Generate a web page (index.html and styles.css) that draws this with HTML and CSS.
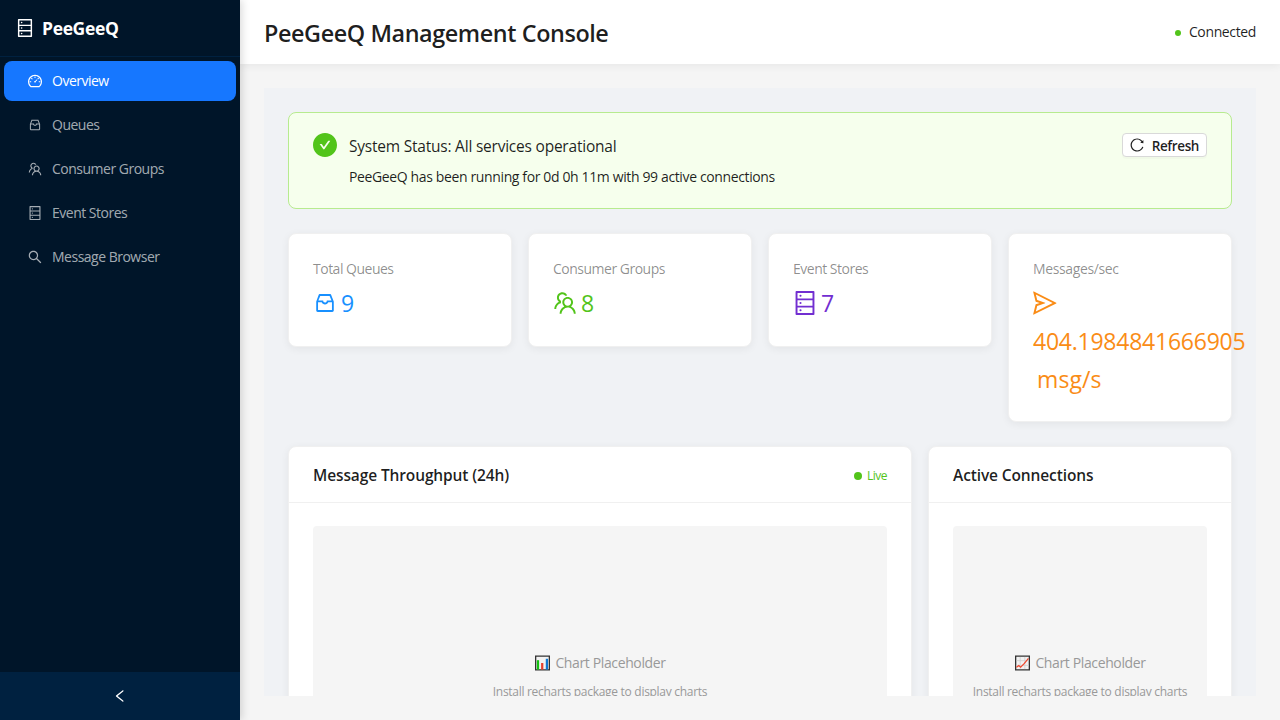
FILE: index.html
```html
<!DOCTYPE html>
<html lang="en">
<head>
<meta charset="utf-8">
<title>PeeGeeQ Management Console</title>
<link rel="stylesheet" href="styles.css">
</head>
<body>
<svg class="sprite" aria-hidden="true">
  <symbol id="database" viewBox="64 64 896 896"><path d="M832 64H192c-17.7 0-32 14.3-32 32v832c0 17.7 14.3 32 32 32h640c17.7 0 32-14.3 32-32V96c0-17.7-14.3-32-32-32zm-600 72h560v208H232V136zm560 480H232V408h560v208zm0 272H232V680h560v208zM304 240a40 40 0 1080 0 40 40 0 10-80 0zm0 272a40 40 0 1080 0 40 40 0 10-80 0zm0 272a40 40 0 1080 0 40 40 0 10-80 0z"/></symbol>
  <symbol id="dashboard" viewBox="64 64 896 896"><path d="M924.8 385.6a446.7 446.7 0 00-96-142.4 446.7 446.7 0 00-142.4-96C631.1 123.8 572.5 112 512 112s-119.1 11.8-174.4 35.2a446.7 446.7 0 00-142.4 96 446.7 446.7 0 00-96 142.4C75.8 440.9 64 499.5 64 560c0 132.7 58.3 257.7 159.9 343.1l1.7 1.4c5.8 4.8 13.1 7.5 20.6 7.5h531.7c7.5 0 14.8-2.7 20.6-7.5l1.7-1.4C901.7 817.7 960 692.7 960 560c0-60.5-11.9-119.1-35.2-174.4zM761.4 836H262.6A371.12 371.12 0 01140 560c0-99.4 38.7-192.8 109-263 70.3-70.3 163.7-109 263-109 99.4 0 192.8 38.7 263 109 70.3 70.3 109 163.7 109 263 0 105.6-44.5 205.5-122.6 276zM623.5 421.5a8.03 8.03 0 00-11.3 0L527.7 506c-18.7-5-39.4-.2-54.1 14.5a55.95 55.95 0 000 79.2 55.95 55.95 0 0079.2 0 55.87 55.87 0 0014.5-54.1l84.5-84.5c3.1-3.1 3.1-8.2 0-11.3l-28.3-28.3zM490 320h44c4.4 0 8-3.6 8-8v-80c0-4.4-3.6-8-8-8h-44c-4.4 0-8 3.6-8 8v80c0 4.4 3.6 8 8 8zm260 218v44c0 4.4 3.6 8 8 8h80c4.4 0 8-3.6 8-8v-44c0-4.4-3.6-8-8-8h-80c-4.4 0-8 3.6-8 8zm12.7-197.2l-31.1-31.1a8.03 8.03 0 00-11.3 0l-56.6 56.6a8.03 8.03 0 000 11.3l31.1 31.1c3.1 3.1 8.2 3.1 11.3 0l56.6-56.6c3.1-3.1 3.1-8.2 0-11.3zm-458.6-31.1a8.03 8.03 0 00-11.3 0l-31.1 31.1a8.03 8.03 0 000 11.3l56.6 56.6c3.1 3.1 8.2 3.1 11.3 0l31.1-31.1c3.1-3.1 3.1-8.2 0-11.3l-56.6-56.6zM262 530h-80c-4.4 0-8 3.6-8 8v44c0 4.4 3.6 8 8 8h80c4.4 0 8-3.6 8-8v-44c0-4.4-3.6-8-8-8z"/></symbol>
  <symbol id="inbox" viewBox="0 0 1024 1024"><path d="M885.2 446.3l-.2-.8-112.2-285.1c-5-16.1-19.9-27.2-36.8-27.2H281.2c-17 0-32.1 11.3-36.9 27.6L139.4 443l-.3.7-.2.8c-1.3 4.9-1.7 9.9-1 14.8-.1 1.6-.2 3.2-.2 4.8V830a60.9 60.9 0 0060.8 60.8h627.2c33.5 0 60.8-27.3 60.9-60.8V464.1c0-1.3 0-2.6-.1-3.7.4-4.9 0-9.6-1.3-14.1zm-295.8-43l-.3 15.7c-.8 44.9-31.8 75.1-77.1 75.1-22.1 0-41.1-7.1-54.8-20.6S436 441.2 435.6 419l-.3-15.7H229.5L309 210h399.2l81.7 193.3H589.4zm-375 76.8h157.3c24.3 57.1 76 90.8 140.4 90.8 33.7 0 65-9.4 90.3-27.2 22.2-15.6 39.5-37.4 50.7-63.6h156.5V814H214.4V480.1z"/></symbol>
  <symbol id="team" viewBox="64 64 896 896"><path d="M824.2 699.9a301.55 301.55 0 00-86.4-60.4C783.1 602.8 812 546.8 812 484c0-110.8-92.4-201.7-203.2-200-109.1 1.7-197 90.6-197 200 0 62.8 29 118.8 74.2 155.5a300.95 300.95 0 00-86.4 60.4C345 754.6 314 826.8 312 903.8a8 8 0 008 8.2h56c4.3 0 7.9-3.4 8-7.7 1.9-58 25.4-112.3 66.7-153.5A226.62 226.62 0 01612 684c60.9 0 118.2 23.7 161.3 66.8C814.6 792 838 846.3 840 904.3c.1 4.3 3.7 7.7 8 7.7h56a8 8 0 008-8.2c-2-77-33-149.2-87.8-203.9zM612 612c-34.2 0-66.4-13.3-90.5-37.5a126.86 126.86 0 01-37.5-91.8c.3-32.8 13.4-64.5 36.3-88 24-24.6 56.1-38.3 90.4-38.7 33.9-.3 66.8 12.9 91 36.6 24.8 24.3 38.4 56.8 38.4 91.4 0 34.2-13.3 66.3-37.5 90.5A127.3 127.3 0 01612 612zM361.5 510.4c-.9-8.7-1.4-17.5-1.4-26.4 0-15.9 1.5-31.4 4.3-46.5.7-3.6-1.2-7.3-4.5-8.8-13.6-6.1-26.1-14.5-36.9-25.1a127.54 127.54 0 01-38.7-95.4c.9-32.1 13.8-62.6 36.3-85.6 24.7-25.3 57.9-39.1 93.2-38.7 31.9.3 62.7 12.6 86 34.4 7.9 7.4 14.7 15.6 20.4 24.4 2 3.1 5.9 4.4 9.3 3.2 17.6-6.1 36.2-10.4 55.3-12.4 5.6-.6 8.8-6.6 6.3-11.6-32.5-64.3-98.9-108.7-175.7-109.9-110.9-1.7-203.3 89.2-203.3 199.9 0 62.8 28.9 118.8 74.2 155.5-31.8 14.7-61.1 35-86.5 60.4-54.8 54.7-85.8 126.9-87.8 204a8 8 0 008 8.2h56.1c4.3 0 7.9-3.4 8-7.7 1.9-58 25.4-112.3 66.7-153.5 29.4-29.4 65.4-49.8 104.7-59.7 3.9-1 6.5-4.7 6-8.7z"/></symbol>
  <symbol id="search" viewBox="64 64 896 896"><path d="M909.6 854.5L649.9 594.8C690.2 542.7 712 479 712 412c0-80.2-31.3-155.4-87.9-212.1-56.6-56.7-132-87.9-212.1-87.9s-155.5 31.3-212.1 87.9C143.2 256.5 112 331.8 112 412c0 80.1 31.3 155.5 87.9 212.1C256.5 680.8 331.8 712 412 712c67 0 130.6-21.8 182.7-62l259.7 259.6a8.2 8.2 0 0011.6 0l43.6-43.5a8.2 8.2 0 000-11.6zM570.4 570.4C528 612.7 471.8 636 412 636s-116-23.3-158.4-65.6C211.3 528 188 471.8 188 412s23.3-116.1 65.6-158.4C296 211.3 352.2 188 412 188s116.1 23.2 158.4 65.6S636 352.2 636 412s-23.3 116.1-65.6 158.4z"/></symbol>
  <symbol id="reload" viewBox="64 64 896 896"><path d="M909.1 209.3l-56.4 44.1C775.8 155.1 656.2 92 521.9 92 290 92 102.3 279.5 102 511.5 101.7 743.7 289.8 932 521.9 932c181.3 0 335.8-115 394.6-276.1 1.5-4.2-.7-8.9-4.9-10.3l-56.7-19.5a8 8 0 00-10.1 4.8c-1.8 5-3.8 10-5.9 14.9-17.3 41-42.1 77.8-73.7 109.4A344.77 344.77 0 01655.9 829c-42.3 17.9-87.4 27-133.8 27-46.5 0-91.5-9.1-133.8-27A341.5 341.5 0 01279 755.2a342.16 342.16 0 01-73.7-109.4c-17.9-42.4-27-87.4-27-133.9s9.1-91.5 27-133.9c17.3-41 42.1-77.8 73.7-109.4 31.6-31.6 68.4-56.4 109.3-73.8 42.3-17.9 87.4-27 133.8-27 46.5 0 91.5 9.1 133.8 27a341.5 341.5 0 01109.3 73.8c9.9 9.9 19.2 20.4 27.8 31.4l-60.2 47a8 8 0 003 14.1l175.6 43c5 1.2 9.9-2.6 9.9-7.7l.8-180.9c-.1-6.6-7.8-10.3-13-6.2z"/></symbol>
  <symbol id="send" viewBox="64 64 896 896"><path d="M931.4 498.9L94.9 79.5c-3.4-1.7-7.3-2.1-11-1.2a15.99 15.99 0 00-11.7 19.3l86.2 352.2c1.3 5.3 5.2 9.6 10.4 11.3l147.7 50.7-147.6 50.7c-5.2 1.8-9.1 6-10.3 11.3L72.2 926.5c-.9 3.7-.5 7.6 1.2 10.9 3.9 7.9 13.5 11.1 21.5 7.2l836.5-417c3.1-1.5 5.6-4.1 7.2-7.1 3.9-8 .7-17.6-7.2-21.6zM170.8 826.3l50.3-205.6 295.2-101.3c2.3-.8 4.2-2.6 5-5 1.4-4.2-.8-8.7-5-10.2L221.1 403 171 198.2l628 314.9-628.2 313.2z"/></symbol>
  <symbol id="left" viewBox="64 64 896 896"><path d="M724 218.3V141c0-6.7-7.7-10.4-12.9-6.3L260.3 486.8a31.86 31.86 0 000 50.3l450.8 352.1c5.3 4.1 12.9.4 12.9-6.3v-77.3c0-4.9-2.3-9.6-6.1-12.6l-360-281 360-281.1c3.8-3 6.1-7.7 6.1-12.6z"/></symbol>
  <symbol id="check" viewBox="64 64 896 896"><path d="M512 64C264.6 64 64 264.6 64 512s200.6 448 448 448 448-200.6 448-448S759.4 64 512 64zm193.5 301.7l-210.6 292a31.8 31.8 0 01-51.7 0L318.5 484.9c-3.8-5.3 0-12.7 6.5-12.7h46.9c10.2 0 19.9 4.9 25.9 13.3l71.2 98.8 157.2-218c6-8.3 15.6-13.3 25.9-13.3H699c6.5 0 10.3 7.4 6.5 12.7z"/></symbol>
</svg>
<div class="layout">
  <aside class="sider">
    <div class="logo"><svg class="logo-icon"><use href="#database"/></svg><span>PeeGeeQ</span></div>
    <nav class="menu">
      <a class="item active"><svg><use href="#dashboard"/></svg><span>Overview</span></a>
      <a class="item"><svg><use href="#inbox"/></svg><span>Queues</span></a>
      <a class="item"><svg><use href="#team"/></svg><span>Consumer Groups</span></a>
      <a class="item"><svg><use href="#database"/></svg><span>Event Stores</span></a>
      <a class="item"><svg><use href="#search"/></svg><span>Message Browser</span></a>
    </nav>
    <div class="trigger"><svg><use href="#left"/></svg></div>
  </aside>
  <div class="main">
    <header class="header">
      <h1>PeeGeeQ Management Console</h1>
      <div class="conn"><i></i><span>Connected</span></div>
    </header>
    <main class="content">
      <section class="alert">
        <svg class="alert-icon"><use href="#check"/></svg>
        <div class="alert-text">
          <div class="alert-title">System Status: All services operational</div>
          <div class="alert-desc">PeeGeeQ has been running for 0d 0h 11m with 99 active connections</div>
        </div>
        <button class="refresh"><svg><use href="#reload"/></svg><span>Refresh</span></button>
      </section>
      <section class="stats">
        <div class="card stat blue"><div class="label">Total Queues</div><div class="value"><svg><use href="#inbox"/></svg><span>9</span></div></div>
        <div class="card stat green"><div class="label">Consumer Groups</div><div class="value"><svg><use href="#team"/></svg><span>8</span></div></div>
        <div class="card stat purple"><div class="label">Event Stores</div><div class="value"><svg><use href="#database"/></svg><span>7</span></div></div>
        <div class="card stat orange"><div class="label">Messages/sec</div><div class="value stacked"><svg><use href="#send"/></svg><span class="rate">404.1984841666905</span><span class="unit">msg/s</span></div></div>
      </section>
      <section class="charts">
        <div class="card">
          <div class="head"><h2>Message Throughput (24h)</h2><div class="live"><i></i><span>Live</span></div></div>
          <div class="body"><div class="placeholder">
            <div class="ph-title"><svg viewBox="0 0 16 16"><path fill="#f2f2f2" stroke="#333" stroke-width="1.4" d="M.7.7h14.6v14.6H.7z"/><path fill="#13c20f" d="M2 5h2.4v10H2z"/><path fill="#e8402c" d="M6.5 8h2.4v7H6.5z"/><path fill="#0f78d4" d="M11.5 3.5h2.4V15h-2.4z"/></svg><span>Chart Placeholder</span></div>
            <div class="ph-note">Install recharts package to display charts</div>
          </div></div>
        </div>
        <div class="card">
          <div class="head"><h2>Active Connections</h2></div>
          <div class="body"><div class="placeholder">
            <div class="ph-title"><svg viewBox="0 0 16 16"><path fill="#f2f2f2" stroke="#333" stroke-width="1.4" d="M.7.7h14.6v14.6H.7z"/><path fill="none" stroke="#ccc" stroke-width=".8" d="M5.5 1.5v13M10.5 1.5v13M1.5 5.5h13M1.5 10.5h13"/><path fill="none" stroke="#f0452b" stroke-width="1.3" d="M1.5 12.5l2.5-1.7 2 1.7 4-4L14.3 3"/></svg><span>Chart Placeholder</span></div>
            <div class="ph-note">Install recharts package to display charts</div>
          </div></div>
        </div>
      </section>
    </main>
  </div>
</div>
</body>
</html>
```
FILE: styles.css
```css
* { box-sizing: border-box; }
body {
  margin: 0;
  font: 14px/22px "Open Sans", "Noto Sans", sans-serif;
  letter-spacing: -0.37px;
  color: rgba(0, 0, 0, 0.88);
  background: #f5f5f5;
}
h1, h2 { margin: 0; }
svg { display: block; fill: currentColor; flex: none; }
.sprite { display: none; }
.layout { display: flex; height: 720px; overflow: hidden; }

.sider {
  width: 240px;
  flex: none;
  display: flex;
  flex-direction: column;
  background: #001529;
  box-shadow: 2px 0 8px rgba(0, 0, 0, 0.15);
  z-index: 2;
}
.logo {
  height: 57px;
  display: flex;
  align-items: center;
  gap: 8px;
  padding: 0 16px;
  border-bottom: 1px solid #002140;
  color: #fff;
  font-size: 17.5px;
  font-weight: 700;
  letter-spacing: -0.35px;
}
.logo-icon { width: 18px; height: 18px; }
.menu { flex: 1; display: flex; flex-direction: column; gap: 4px; padding: 4px; }
.item {
  height: 40px;
  display: flex;
  align-items: center;
  gap: 10px;
  padding-left: 24px;
  border-radius: 8px;
  color: rgba(255, 255, 255, 0.65);
  letter-spacing: -0.5px;
}
.item svg { width: 14px; height: 14px; }
.active { background: #1677ff; color: #fff; }
.trigger {
  height: 48px;
  display: flex;
  align-items: center;
  justify-content: center;
  background: #002140;
  color: #fff;
}
.trigger svg { width: 14px; height: 14px; }

.main { flex: 1; min-width: 0; display: flex; flex-direction: column; }
.header {
  height: 64px;
  flex: none;
  display: flex;
  align-items: center;
  justify-content: space-between;
  padding: 0 24px;
  background: #fff;
  box-shadow: 0 2px 8px rgba(0, 0, 0, 0.06);
}
h1 { padding-top: 2px; font-size: 23.4px; line-height: 32px; font-weight: 600; letter-spacing: -0.42px; }
.conn { display: flex; align-items: center; gap: 8px; }
.conn i { width: 6px; height: 6px; margin-top: 2px; border-radius: 50%; background: #52c41a; }

.content {
  flex: 1;
  min-height: 0;
  overflow: hidden;
  margin: 24px;
  padding: 24px;
  background: #f0f2f5;
}
.alert {
  display: flex;
  align-items: flex-start;
  height: 97px;
  padding: 20px 24px;
  border: 1px solid #b7eb8f;
  border-radius: 8px;
  background: #f6ffed;
}
.alert-icon { width: 24px; height: 24px; color: #52c41a; margin-right: 12px; }
.alert-text { flex: 1; padding-top: 1px; white-space: nowrap; }
.alert-title { font-size: 15.5px; line-height: 24px; letter-spacing: -0.22px; margin-bottom: 8px; }
.refresh {
  height: 24px;
  display: flex;
  align-items: center;
  gap: 8px;
  padding: 0 7px;
  border: 1px solid #d9d9d9;
  border-radius: 4px;
  background: #fff;
  box-shadow: 0 2px 0 rgba(0, 0, 0, 0.02);
  font: 600 13.5px/22px "Open Sans", "Noto Sans", sans-serif;
  letter-spacing: -0.4px;
  color: rgba(0, 0, 0, 0.88);
}
.refresh span { padding-top: 2px; }
.refresh svg { width: 14px; height: 14px; }

.card {
  min-width: 0;
  border: 1px solid #f0f0f0;
  border-radius: 8px;
  background: #fff;
  box-shadow: 0 2px 8px rgba(0, 0, 0, 0.06);
}
.stats {
  display: grid;
  grid-template-columns: repeat(4, 1fr);
  align-items: start;
  gap: 16px;
  margin: 24px 0;
}
.stat { padding: 24px; }
.label { color: rgba(0, 0, 0, 0.45); letter-spacing: -0.5px; margin-bottom: 4px; }
.orange .label { letter-spacing: -0.37px; }
.value { display: flex; align-items: center; gap: 4px; font-size: 23px; line-height: 37.7px; }
.value svg { width: 24px; height: 24px; }
.value span { margin: 1px 0 -1px; }
.stacked { flex-direction: column; align-items: flex-start; gap: 0; }
.stacked svg { margin: 7px 0 6.7px; }
.rate { letter-spacing: -0.24px; }
.value .unit { margin: 2px 0 -2px; padding-left: 4px; letter-spacing: 0.1px; }
.blue .value { color: #1890ff; }
.green .value { color: #52c41a; }
.purple .value { color: #722ed1; }
.orange .value { color: #fa8c16; }

.charts { display: grid; grid-template-columns: 624px 1fr; gap: 16px; }
.head {
  height: 56px;
  display: flex;
  align-items: center;
  justify-content: space-between;
  padding: 0 24px;
  border-bottom: 1px solid #f0f0f0;
}
h2 { padding-top: 1px; font-size: 15.5px; line-height: 24px; font-weight: 600; letter-spacing: -0.12px; }
.live { display: flex; align-items: center; gap: 5px; padding-top: 2px; font-size: 12px; letter-spacing: -0.5px; color: #52c41a; }
.live i { width: 8px; height: 8px; border-radius: 50%; background: #52c41a; }
.body { padding: 23px 24px 24px; }
.placeholder {
  height: 300px;
  display: flex;
  flex-direction: column;
  align-items: center;
  justify-content: center;
  gap: 8px;
  border-radius: 4px;
  background: #f5f5f5;
  color: #999;
}
.ph-title { display: flex; align-items: center; gap: 5px; margin-left: 1px; }
.ph-title svg { width: 15px; height: 16px; }
.ph-note { font-size: 12px; line-height: 19px; letter-spacing: -0.29px; }
```
